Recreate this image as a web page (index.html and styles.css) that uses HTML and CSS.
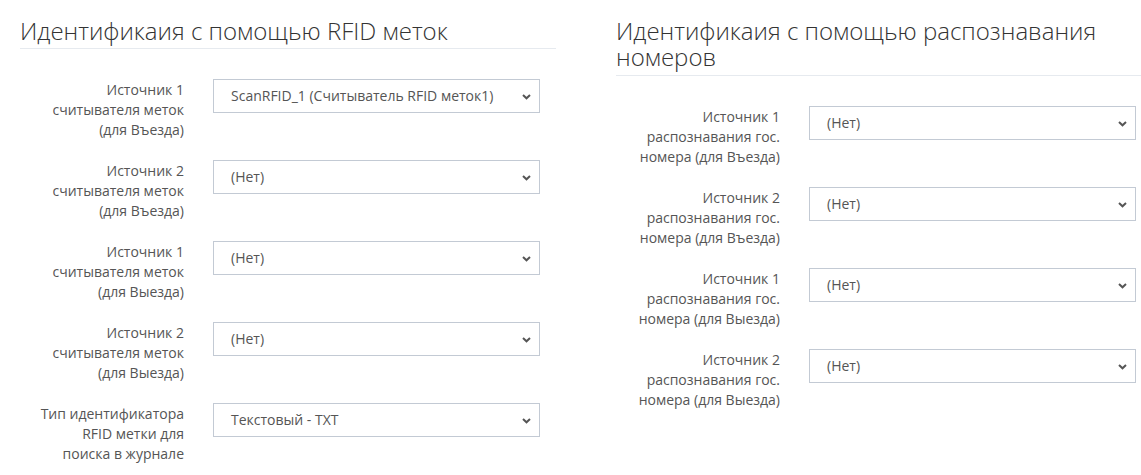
FILE: index.html
```html
<!DOCTYPE html>
<html lang="ru">
<head>
<meta charset="utf-8">
<link rel="stylesheet" href="styles.css">
</head>
<body>
<div class="page">
  <section class="panel">
    <h3 class="panel-title">Идентификаия с помощью RFID меток</h3>
    <div class="form">
      <div class="row">
        <label class="lbl">Источник 1 считывателя меток (для Въезда)</label>
        <div class="select"><span class="val">ScanRFID_1 (Считыватель RFID меток1)</span><svg class="chev" viewBox="0 0 9 6" width="9" height="6"><path d="M1 1 L4.5 4.3 L8 1" fill="none" stroke="#555" stroke-width="2"/></svg></div>
      </div>
      <div class="row">
        <label class="lbl">Источник 2 считывателя меток (для Въезда)</label>
        <div class="select"><span class="val">(Нет)</span><svg class="chev" viewBox="0 0 9 6" width="9" height="6"><path d="M1 1 L4.5 4.3 L8 1" fill="none" stroke="#555" stroke-width="2"/></svg></div>
      </div>
      <div class="row">
        <label class="lbl">Источник 1 считывателя меток (для Выезда)</label>
        <div class="select"><span class="val">(Нет)</span><svg class="chev" viewBox="0 0 9 6" width="9" height="6"><path d="M1 1 L4.5 4.3 L8 1" fill="none" stroke="#555" stroke-width="2"/></svg></div>
      </div>
      <div class="row">
        <label class="lbl">Источник 2 считывателя меток (для Выезда)</label>
        <div class="select"><span class="val">(Нет)</span><svg class="chev" viewBox="0 0 9 6" width="9" height="6"><path d="M1 1 L4.5 4.3 L8 1" fill="none" stroke="#555" stroke-width="2"/></svg></div>
      </div>
      <div class="row">
        <label class="lbl">Тип идентификатора RFID метки для поиска в журнале</label>
        <div class="select"><span class="val">Текстовый - TXT</span><svg class="chev" viewBox="0 0 9 6" width="9" height="6"><path d="M1 1 L4.5 4.3 L8 1" fill="none" stroke="#555" stroke-width="2"/></svg></div>
      </div>
    </div>
  </section>
  <section class="panel">
    <h3 class="panel-title">Идентификаия с помощью распознавания номеров</h3>
    <div class="form">
      <div class="row">
        <label class="lbl">Источник 1 распознавания гос. номера (для Въезда)</label>
        <div class="select"><span class="val">(Нет)</span><svg class="chev" viewBox="0 0 9 6" width="9" height="6"><path d="M1 1 L4.5 4.3 L8 1" fill="none" stroke="#555" stroke-width="2"/></svg></div>
      </div>
      <div class="row">
        <label class="lbl">Источник 2 распознавания гос. номера (для Въезда)</label>
        <div class="select"><span class="val">(Нет)</span><svg class="chev" viewBox="0 0 9 6" width="9" height="6"><path d="M1 1 L4.5 4.3 L8 1" fill="none" stroke="#555" stroke-width="2"/></svg></div>
      </div>
      <div class="row">
        <label class="lbl">Источник 1 распознавания гос. номера (для Выезда)</label>
        <div class="select"><span class="val">(Нет)</span><svg class="chev" viewBox="0 0 9 6" width="9" height="6"><path d="M1 1 L4.5 4.3 L8 1" fill="none" stroke="#555" stroke-width="2"/></svg></div>
      </div>
      <div class="row">
        <label class="lbl">Источник 2 распознавания гос. номера (для Выезда)</label>
        <div class="select"><span class="val">(Нет)</span><svg class="chev" viewBox="0 0 9 6" width="9" height="6"><path d="M1 1 L4.5 4.3 L8 1" fill="none" stroke="#555" stroke-width="2"/></svg></div>
      </div>
    </div>
  </section>
</div>
</body>
</html>
```
FILE: styles.css
```css
html, body {
  margin: 0;
  padding: 0;
  background: #fff;
}
body {
  font-family: "Open Sans", "Liberation Sans", sans-serif;
  font-size: 14px;
  line-height: 20px;
  color: #555;
}
.page {
  display: grid;
  grid-template-columns: 536px 525px;
  column-gap: 60px;
  padding-left: 20px;
}
.panel-title {
  margin: 18px 0 0;
  padding-bottom: 4px;
  border-bottom: 1px solid #e6eaef;
  font-size: 24px;
  line-height: 26.4px;
  font-weight: 300;
  color: #333;
}
.form {
  padding-top: 30px;
}
.row {
  display: grid;
  grid-template-columns: 164px 327px;
  column-gap: 29px;
  align-items: start;
  margin-bottom: 20px;
}
.lbl {
  box-sizing: border-box;
  text-align: right;
  padding: 1px 0 0 14px;
  color: #555;
}
.select {
  position: relative;
  height: 34px;
  box-sizing: border-box;
  border: 1px solid #c3cad4;
  background: #fff;
  padding: 0 30px 0 17px;
  display: flex;
  align-items: center;
  color: #555;
  white-space: nowrap;
}
.chev {
  position: absolute;
  right: 8px;
  top: 14px;
}
```
